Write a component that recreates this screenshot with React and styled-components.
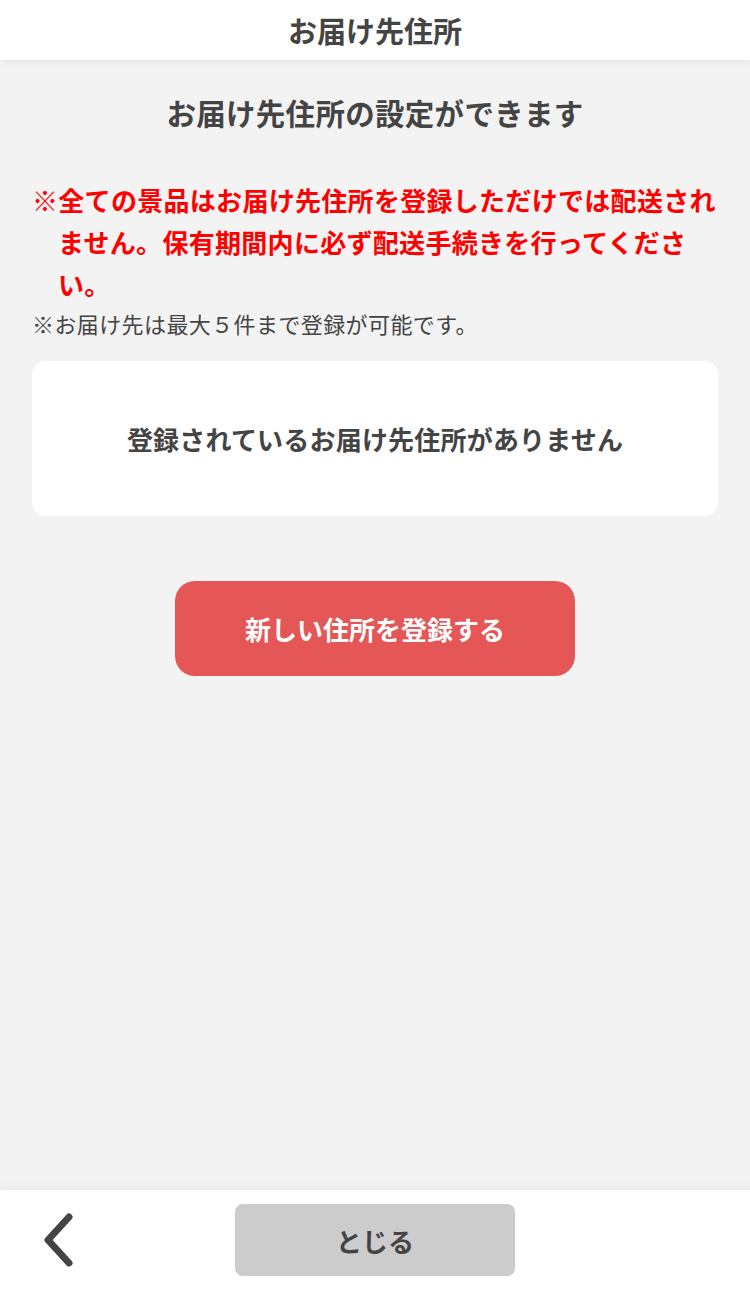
import styled, { createGlobalStyle } from 'styled-components'

const GlobalStyle = createGlobalStyle`
  html, body {
    margin: 0;
    padding: 0;
    background: #f3f3f3;
  }
  body {
    font-family: "Noto Sans CJK JP", "Noto Sans", sans-serif;
    color: #444;
  }
`

function App() {
  return (
    <Page>
      <GlobalStyle />
      <Header>
        <Title>お届け先住所</Title>
      </Header>
      <Main>
        <Lead>お届け先住所の設定ができます</Lead>
        <Warning>
          ※全ての景品はお届け先住所を登録しただけでは配送されません。保有期間内に必ず配送手続きを行ってください。
        </Warning>
        <Note>※お届け先は最大５件まで登録が可能です。</Note>
        <EmptyCard>登録されているお届け先住所がありません</EmptyCard>
        <ButtonRow>
          <PrimaryButton>新しい住所を登録する</PrimaryButton>
        </ButtonRow>
      </Main>
      <Footer>
        <BackButton aria-label="戻る">
          <svg width="36" height="56" viewBox="0 0 36 56" fill="none">
            <path d="M30 5 L9 28 L30 51" stroke="#444" strokeWidth="7" strokeLinecap="round" strokeLinejoin="round" />
          </svg>
        </BackButton>
        <CloseButton>とじる</CloseButton>
        <span />
      </Footer>
    </Page>
  )
}

const Page = styled.div`
  min-height: 100vh;
  display: flex;
  flex-direction: column;
`

const Header = styled.header`
  height: 60px;
  background: #fff;
  display: flex;
  align-items: center;
  justify-content: center;
  box-shadow: 0 2px 6px rgba(0, 0, 0, 0.06);
  position: relative;
  z-index: 1;
`

const Title = styled.h1`
  margin: 0;
  font-size: 29px;
  font-weight: 700;
  color: #444;
  line-height: 1;
`

const Main = styled.main`
  flex: 1;
  padding: 30px 32px 40px;
  display: flex;
  flex-direction: column;
`

const Lead = styled.p`
  margin: 0;
  text-align: center;
  font-size: 29.5px;
  font-weight: 700;
  line-height: 45px;
  letter-spacing: 0.3px;
`

const Warning = styled.p`
  margin: 44px 0 0;
  color: #ff0000;
  font-size: 26px;
  font-weight: 700;
  line-height: 42px;
  letter-spacing: 0.3px;
  padding-left: 26px;
  text-indent: -26px;
`

const Note = styled.p`
  margin: 2px 0 0;
  font-size: 22px;
  line-height: 33px;
  letter-spacing: 0.4px;
  color: #444;
`

const EmptyCard = styled.div`
  margin-top: 21px;
  height: 155px;
  background: #fff;
  border-radius: 14px;
  display: flex;
  align-items: center;
  justify-content: center;
  font-size: 26px;
  font-weight: 700;
  letter-spacing: 0.2px;
  color: #444;
`

const ButtonRow = styled.div`
  margin-top: 65px;
  display: flex;
  justify-content: center;
`

const PrimaryButton = styled.button`
  width: 400px;
  height: 95px;
  border: none;
  border-radius: 20px;
  background: #e55757;
  color: #fff;
  font-family: inherit;
  font-size: 26px;
  font-weight: 700;
`

const Footer = styled.footer`
  height: 100px;
  background: #fff;
  display: grid;
  grid-template-columns: 1fr 280px 1fr;
  align-items: center;
  box-shadow: 0 -3px 8px rgba(0, 0, 0, 0.05);
`

const BackButton = styled.button`
  justify-self: start;
  margin-left: 39px;
  padding: 0;
  border: none;
  background: none;
  display: flex;
`

const CloseButton = styled.button`
  height: 72px;
  border: none;
  border-radius: 8px;
  background: #ccc;
  color: #444;
  font-family: inherit;
  font-size: 26px;
  font-weight: 700;
`

export default App
